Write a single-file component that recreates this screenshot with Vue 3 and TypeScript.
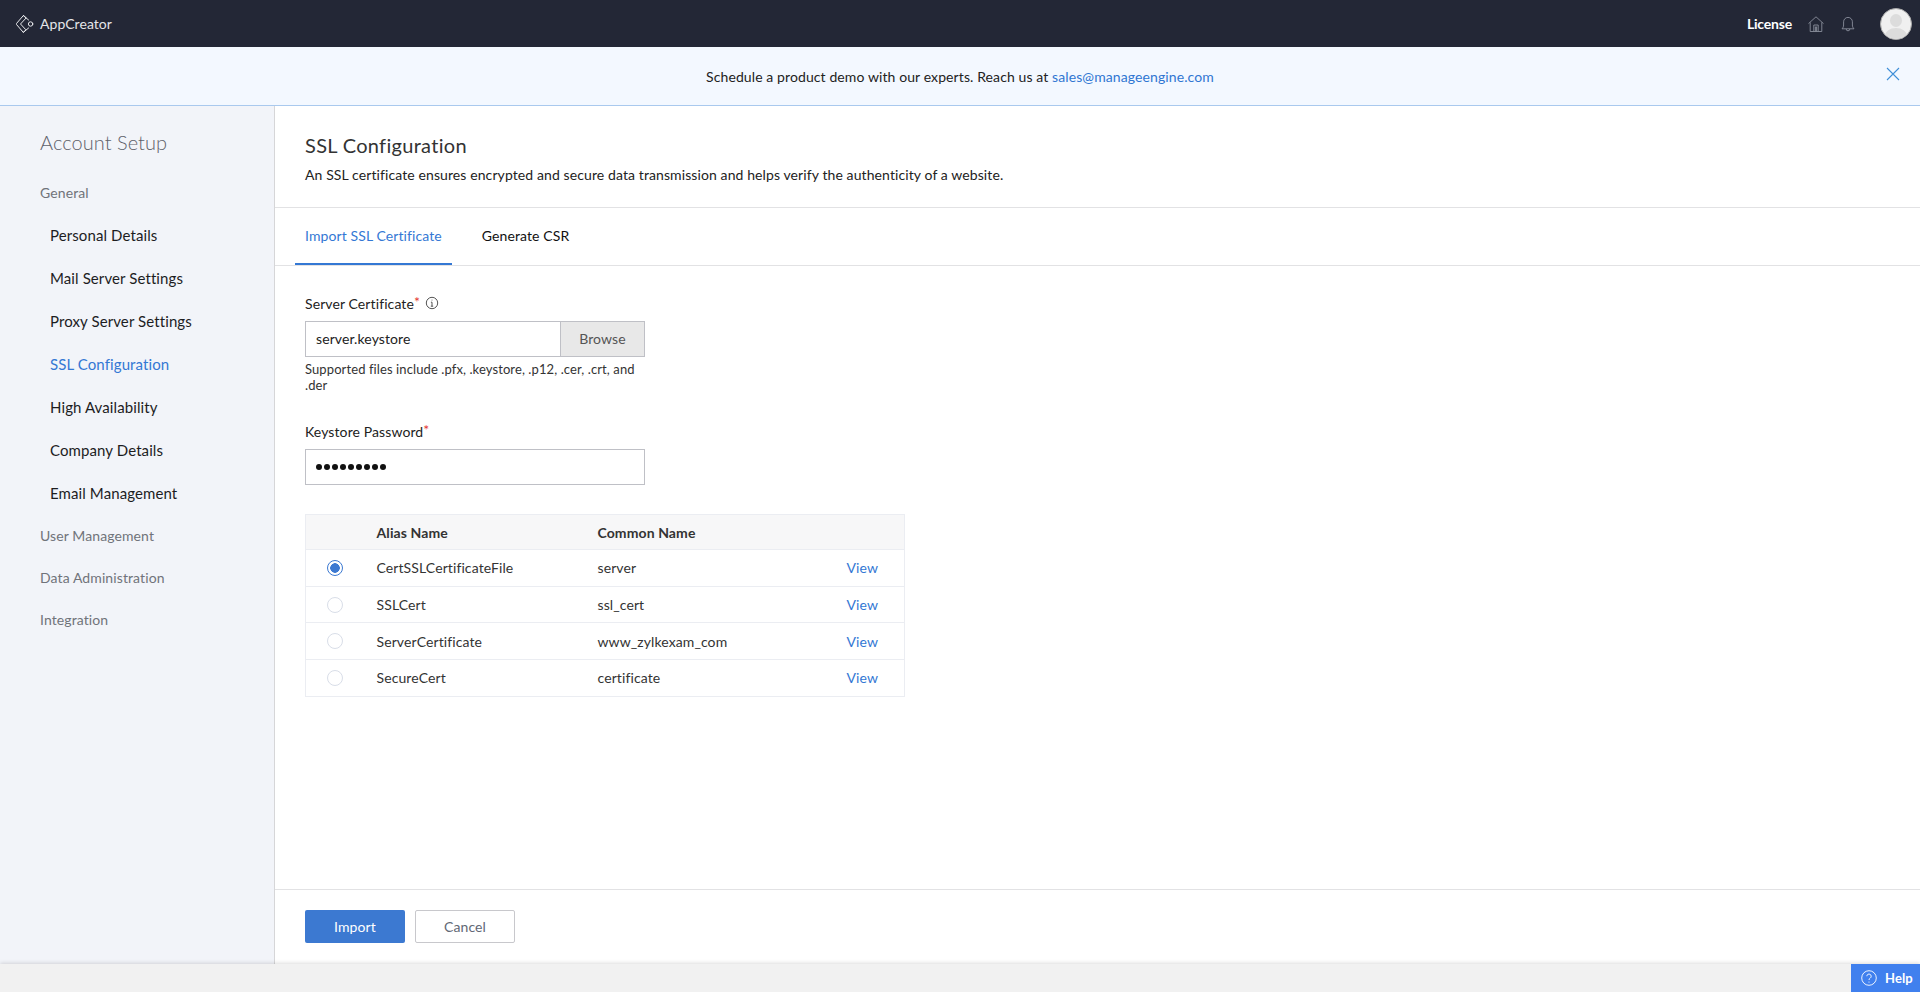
<script setup lang="ts">
import { ref } from 'vue'

interface CertRow {
  alias: string
  common: string
}

const generalItems = [
  'Personal Details',
  'Mail Server Settings',
  'Proxy Server Settings',
  'SSL Configuration',
  'High Availability',
  'Company Details',
  'Email Management'
]
const otherGroups = ['User Management', 'Data Administration', 'Integration']

const certs: CertRow[] = [
  { alias: 'CertSSLCertificateFile', common: 'server' },
  { alias: 'SSLCert', common: 'ssl_cert' },
  { alias: 'ServerCertificate', common: 'www_zylkexam_com' },
  { alias: 'SecureCert', common: 'certificate' }
]

const selected = ref('CertSSLCertificateFile')
</script>

<template>
  <div class="page">
    <header class="topbar">
      <div class="brand">
        <svg class="logo" viewBox="0 0 19 18" fill="none" stroke="#e8e9ec" stroke-width="1" stroke-linejoin="round" stroke-linecap="round">
          <path d="M7.3.6.6 8.4a.9.9 0 0 0 0 1.2l6.7 7.8 2.6-2.6L4.5 9l5.4-5.8z" />
          <path d="M7.3.6 12.6 5M7.3 17.4 12.6 13" />
          <circle cx="14.6" cy="9" r="2.2" />
        </svg>
        <span>AppCreator</span>
      </div>
      <div class="top-actions">
        <span class="license">License</span>
        <svg class="top-icon home" viewBox="0 0 16 16" fill="none" stroke="#8a8f9c" stroke-width="0.9">
          <path d="M0.5 7.6 8 0.8l7.5 6.8M2.2 6.4V15.5h11.6V6.4M5.8 15.5V9h4.4v6.5M7.4 15.5v-4.6h1.2v4.6" />
        </svg>
        <svg class="top-icon bell" viewBox="0 0 14 16" fill="none" stroke="#8a8f9c" stroke-width="0.9">
          <path d="M1 12.8c1-1 1.6-2 1.6-3.8V5.8a4.4 4.4 0 0 1 8.8 0V9c0 1.8.6 2.8 1.6 3.8zM5.2 13a1.8 1.8 0 0 0 3.6 0" />
        </svg>
        <div class="avatar">
          <span class="avatar-head"></span>
          <span class="avatar-body"></span>
        </div>
      </div>
    </header>

    <div class="banner">
      <p>Schedule a product demo with our experts. Reach us at <a class="mail">sales@manageengine.com</a></p>
      <svg class="banner-close" viewBox="0 0 14 14" fill="none" stroke="#3f8fd8" stroke-width="1.1">
        <path d="M1 1l12 12M13 1 1 13" />
      </svg>
    </div>

    <div class="body">
      <aside class="sidebar">
        <h2 class="side-title">Account Setup</h2>
        <div class="side-group">General</div>
        <ul class="side-list">
          <li v-for="item in generalItems" :key="item" :class="['side-item', { active: item === 'SSL Configuration' }]">{{ item }}</li>
        </ul>
        <div v-for="group in otherGroups" :key="group" class="side-group lower">{{ group }}</div>
      </aside>

      <main class="content">
        <section class="content-head">
          <h1>SSL Configuration</h1>
          <p>An SSL certificate ensures encrypted and secure data transmission and helps verify the authenticity of a website.</p>
        </section>

        <nav class="tabs">
          <button class="tab tab-active">Import SSL Certificate</button>
          <button class="tab">Generate CSR</button>
        </nav>

        <div class="form">
          <label class="field-label">
            Server Certificate<span class="req">*</span>
            <svg class="info" viewBox="0 0 14 14" fill="none" stroke="#555" stroke-width="1">
              <circle cx="7" cy="7" r="5.7" />
              <path d="M7 6.2v4M5.8 10.2h2.4M5.9 6.2H7" />
              <circle cx="7" cy="4.1" r=".5" fill="#555" stroke="none" />
            </svg>
          </label>
          <div class="file-input">
            <span class="file-name">server.keystore</span>
            <span class="browse">Browse</span>
          </div>
          <p class="hint">Supported files include .pfx, .keystore, .p12, .cer, .crt, and .der</p>

          <label class="field-label second">Keystore Password<span class="req">*</span></label>
          <div class="password">
            <span v-for="n in 9" :key="n" class="dot"></span>
          </div>

          <table class="cert-table">
            <thead>
              <tr>
                <th class="col-radio"></th>
                <th class="col-alias">Alias Name</th>
                <th class="col-common">Common Name</th>
                <th></th>
              </tr>
            </thead>
            <tbody>
              <tr v-for="row in certs" :key="row.alias" @click="selected = row.alias">
                <td class="col-radio">
                  <span :class="['radio', { on: selected === row.alias }]"></span>
                </td>
                <td>{{ row.alias }}</td>
                <td>{{ row.common }}</td>
                <td class="view">View</td>
              </tr>
            </tbody>
          </table>
        </div>

        <footer class="actions">
          <button class="btn btn-primary">Import</button>
          <button class="btn btn-plain">Cancel</button>
        </footer>
      </main>
    </div>

    <div class="bottombar">
      <button class="help">
        <svg class="help-icon" viewBox="0 0 16 16" fill="none" stroke="#fff" stroke-width="0.9">
          <circle cx="8" cy="8" r="7.3" />
          <path d="M5.8 6.2a2.2 2.2 0 1 1 3.4 1.9c-.8.5-1.2.9-1.2 1.9" />
          <circle cx="8" cy="12" r=".6" fill="#fff" stroke="none" />
        </svg>
        Help
      </button>
    </div>
  </div>
</template>

<style scoped>
.page {
  display: flex;
  flex-direction: column;
  height: 992px;
  font-family: Lato, 'Open Sans', sans-serif;
  font-size: 14px;
  letter-spacing: 0.1px;
  font-variant-ligatures: none;
  color: #222;
  overflow: hidden;
}

.topbar {
  flex: 0 0 47px;
  display: flex;
  align-items: center;
  justify-content: space-between;
  background: #232736;
  padding: 0 8px 0 16px;
}

.brand {
  display: flex;
  align-items: center;
  gap: 5px;
  color: #e4e5e9;
  font-size: 14px;
  letter-spacing: 0.05px;
}

.logo {
  width: 19px;
  height: 18px;
}

.top-actions {
  display: flex;
  align-items: center;
}

.license {
  color: #fff;
  font-size: 14px;
  font-weight: 700;
  letter-spacing: -0.2px;
  margin-right: 16px;
}

.top-icon {
  height: 16px;
}

.home {
  width: 16px;
  margin-right: 17px;
}

.bell {
  width: 14px;
  margin-right: 25px;
}

.avatar {
  position: relative;
  width: 32px;
  height: 32px;
  box-sizing: border-box;
  border-radius: 50%;
  background: #f0f0f0;
  border: 1px solid #aaa;
  overflow: hidden;
}

.avatar-head {
  position: absolute;
  left: 9px;
  top: 5px;
  width: 12px;
  height: 13px;
  border-radius: 50%;
  background: #dcdcdc;
}

.avatar-body {
  position: absolute;
  left: 4px;
  top: 19px;
  width: 22px;
  height: 16px;
  border-radius: 50%;
  background: #dcdcdc;
}

.banner {
  flex: 0 0 59px;
  box-sizing: border-box;
  display: flex;
  align-items: center;
  justify-content: center;
  position: relative;
  background: #f3f8ff;
  border-bottom: 1px solid #a9c9ee;
}

.banner p {
  margin: 0;
  color: #222;
  font-size: 14px;
}

.mail {
  color: #2f76d2;
}

.banner-close {
  position: absolute;
  right: 20px;
  top: 20px;
  width: 14px;
  height: 14px;
}

.body {
  flex: 1;
  display: flex;
  min-height: 0;
  position: relative;
}

.sidebar {
  flex: 0 0 275px;
  box-sizing: border-box;
  background: #f2f4f9;
  border-right: 1px solid #d6d6d8;
  padding: 23px 0 0 40px;
}

.side-title {
  margin: 0;
  font-size: 20px;
  line-height: 26px;
  font-weight: 300;
  letter-spacing: 0.05px;
  color: #5f626b;
}

.side-group {
  margin-top: 29px;
  height: 18px;
  line-height: 18px;
  font-size: 14px;
  color: #70737a;
}

.side-group.lower {
  margin-top: 24px;
}

.side-list + .side-group.lower {
  margin-top: 12px;
}

.side-list {
  list-style: none;
  margin: 12px 0 0;
  padding: 0;
}

.side-item {
  height: 43px;
  line-height: 43px;
  padding-left: 10px;
  font-size: 15px;
  color: #1d1d1f;
}

.side-item.active {
  color: #3478d4;
}

.content {
  flex: 1;
  display: flex;
  flex-direction: column;
  min-width: 0;
  background: #fff;
}

.content-head {
  flex: 0 0 102px;
  box-sizing: border-box;
  padding: 26px 30px 0;
  border-bottom: 1px solid #e2e2e4;
}

.content-head h1 {
  margin: 0;
  font-size: 20px;
  line-height: 26px;
  font-weight: 400;
  letter-spacing: 0.3px;
  color: #333;
}

.content-head p {
  margin: 8px 0 0;
  font-size: 14px;
  line-height: 18px;
  color: #222;
}

.tabs {
  flex: 0 0 57px;
  box-sizing: border-box;
  display: flex;
  padding-left: 20px;
  border-bottom: 1px solid #e2e2e4;
}

.tab {
  height: 57px;
  box-sizing: border-box;
  padding: 0 10px;
  margin-right: 20px;
  background: none;
  border: 0;
  border-bottom: 2px solid transparent;
  font: inherit;
  letter-spacing: inherit;
  font-size: 14px;
  color: #111;
}

.tab-active {
  color: #3478d4;
  border-bottom-color: #3478d4;
}

.form {
  flex: 1;
  padding: 28px 30px 0;
}

.field-label {
  display: flex;
  align-items: center;
  height: 18px;
  font-size: 14px;
  color: #222;
}

.field-label.second {
  margin-top: 29px;
}

.req {
  color: #e53935;
  align-self: flex-start;
  font-size: 14px;
  line-height: 16px;
}

.info {
  width: 14px;
  height: 14px;
  margin-left: 5px;
}

.file-input {
  display: flex;
  width: 340px;
  height: 36px;
  box-sizing: border-box;
  margin-top: 9px;
  border: 1px solid #bfc0c6;
}

.file-name {
  flex: 1;
  padding-left: 10px;
  line-height: 34px;
  font-size: 14px;
  color: #222;
}

.browse {
  width: 83px;
  text-align: center;
  line-height: 34px;
  font-size: 14px;
  color: #555;
  background: #e8e8e8;
  border-left: 1px solid #bfc0c6;
}

.hint {
  width: 340px;
  margin: 4px 0 0;
  font-size: 13px;
  line-height: 16px;
  color: #333;
}

.password {
  display: flex;
  align-items: center;
  gap: 2px;
  width: 340px;
  height: 36px;
  box-sizing: border-box;
  margin-top: 9px;
  padding-left: 10px;
  border: 1px solid #bfc0c6;
}

.dot {
  width: 6px;
  height: 6px;
  border-radius: 50%;
  background: #111;
}

.cert-table {
  width: 600px;
  margin-top: 29px;
  border-collapse: collapse;
  font-size: 14px;
}

.cert-table th,
.cert-table td {
  border-top: 1px solid #ebedf2;
  border-bottom: 1px solid #ebedf2;
  text-align: left;
  padding: 0;
}

.cert-table tr > :first-child {
  border-left: 1px solid #ebedf2;
}

.cert-table tr > :last-child {
  border-right: 1px solid #ebedf2;
}

.cert-table thead tr {
  height: 35px;
  background: #f7f7f8;
}

.cert-table th {
  font-weight: 700;
  color: #333;
}

.cert-table tbody tr {
  height: 36.7px;
}

.cert-table td {
  color: #333;
}

.col-radio {
  width: 71px;
  padding-left: 21px !important;
  box-sizing: border-box;
}

.col-alias {
  width: 221px;
}

.col-common {
  width: 249px;
}

.radio {
  display: block;
  width: 16px;
  height: 16px;
  box-sizing: border-box;
  border: 1px solid #d9dee8;
  border-radius: 50%;
  background: #fff;
}

.radio.on {
  border-color: #3c79d1;
  background: radial-gradient(circle, #3c79d1 0 4.5px, #fff 5px);
}

.cert-table td.view {
  color: #3478d4;
}

.actions {
  flex: 0 0 75px;
  box-sizing: border-box;
  display: flex;
  gap: 10px;
  padding: 20px 30px 0;
  border-top: 1px solid #e2e2e4;
}

.btn {
  width: 100px;
  height: 33px;
  box-sizing: border-box;
  border-radius: 2px;
  font: inherit;
  letter-spacing: inherit;
  font-size: 14px;
}

.btn-primary {
  background: #3c79d1;
  border: 0;
  color: #fff;
}

.btn-plain {
  background: #fff;
  border: 1px solid #c8c8cc;
  color: #626875;
}

.bottombar {
  flex: 0 0 28px;
  display: flex;
  justify-content: flex-end;
  position: relative;
  background: #f1f1f1;
  box-shadow: 0 -1px 4px rgba(0, 0, 0, 0.14);
}

.help {
  display: flex;
  align-items: center;
  gap: 8px;
  width: 69px;
  height: 28px;
  box-sizing: border-box;
  padding: 0 0 0 10px;
  background: #4080ee;
  border: 0;
  color: #fff;
  font: inherit;
  letter-spacing: inherit;
  font-size: 13px;
  font-weight: 700;
}

.help-icon {
  width: 16px;
  height: 16px;
  flex: none;
}
</style>
